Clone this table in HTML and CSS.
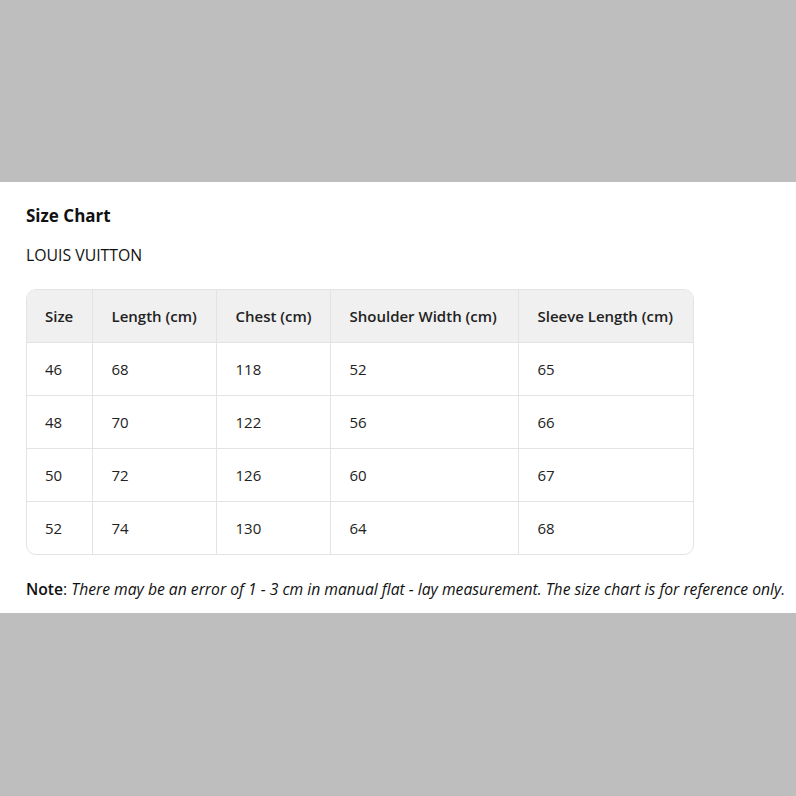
FILE: index.html
```html
<!DOCTYPE html>
<html>
<head>
<meta charset="utf-8">
<link rel="stylesheet" href="styles.css">
</head>
<body>
<section class="band">
  <h2 class="title">Size Chart</h2>
  <p class="brand">LOUIS VUITTON</p>
  <div class="table-wrap">
    <table class="chart">
      <colgroup>
        <col class="c1"><col class="c2"><col class="c3"><col class="c4"><col class="c5">
      </colgroup>
      <thead>
        <tr><th>Size</th><th>Length (cm)</th><th>Chest (cm)</th><th>Shoulder Width (cm)</th><th>Sleeve Length (cm)</th></tr>
      </thead>
      <tbody>
        <tr><td>46</td><td>68</td><td>118</td><td>52</td><td>65</td></tr>
        <tr><td>48</td><td>70</td><td>122</td><td>56</td><td>66</td></tr>
        <tr><td>50</td><td>72</td><td>126</td><td>60</td><td>67</td></tr>
        <tr><td>52</td><td>74</td><td>130</td><td>64</td><td>68</td></tr>
      </tbody>
    </table>
  </div>
  <p class="note"><strong>Note</strong>: <em>There may be an error of 1 - 3 cm in manual flat - lay measurement. The size chart is for reference only.</em></p>
</section>
</body>
</html>
```

FILE: styles.css
```css
html, body {
  margin: 0;
  padding: 0;
  background: #bebebe;
}
body {
  font-family: "Open Sans", "Noto Sans", sans-serif;
  color: #111;
}
.band {
  margin-top: 182px;
  height: 431px;
  background: #fff;
  padding: 0 26px;
  box-sizing: border-box;
  display: flex;
  flex-direction: column;
  align-items: flex-start;
}
.title {
  margin: 22px 0 0;
  font-size: 17px;
  font-weight: 700;
  line-height: 24px;
}
.brand {
  margin: 17px 0 0;
  font-size: 15.8px;
  line-height: 20px;
}
.table-wrap {
  margin-top: 24px;
  width: 668px;
  border: 1px solid #e3e3e3;
  border-radius: 10px;
  overflow: hidden;
  box-sizing: border-box;
}
.chart {
  width: 100%;
  border-collapse: collapse;
  table-layout: fixed;
  font-size: 15px;
}
.c1 { width: 65px; }
.c2 { width: 124px; }
.c3 { width: 114px; }
.c4 { width: 188px; }
.c5 { width: auto; }
.chart th, .chart td {
  text-align: left;
  padding: 0 0 0 19px;
  height: 52px;
  border-right: 1px solid #e3e3e3;
  border-bottom: 1px solid #e3e3e3;
  color: #222;
  white-space: nowrap;
}
.chart tr > :first-child { padding-left: 18px; }
.chart th {
  background: #f0f0f0;
  font-weight: 600;
  height: 52px;
}
.chart tr > :last-child { border-right: none; }
.chart tbody tr:last-child td { border-bottom: none; }
.note {
  margin: 22px 0 0;
  font-size: 15.7px;
  line-height: 24px;
  white-space: nowrap;
}
.note strong { font-weight: 600; }
```
